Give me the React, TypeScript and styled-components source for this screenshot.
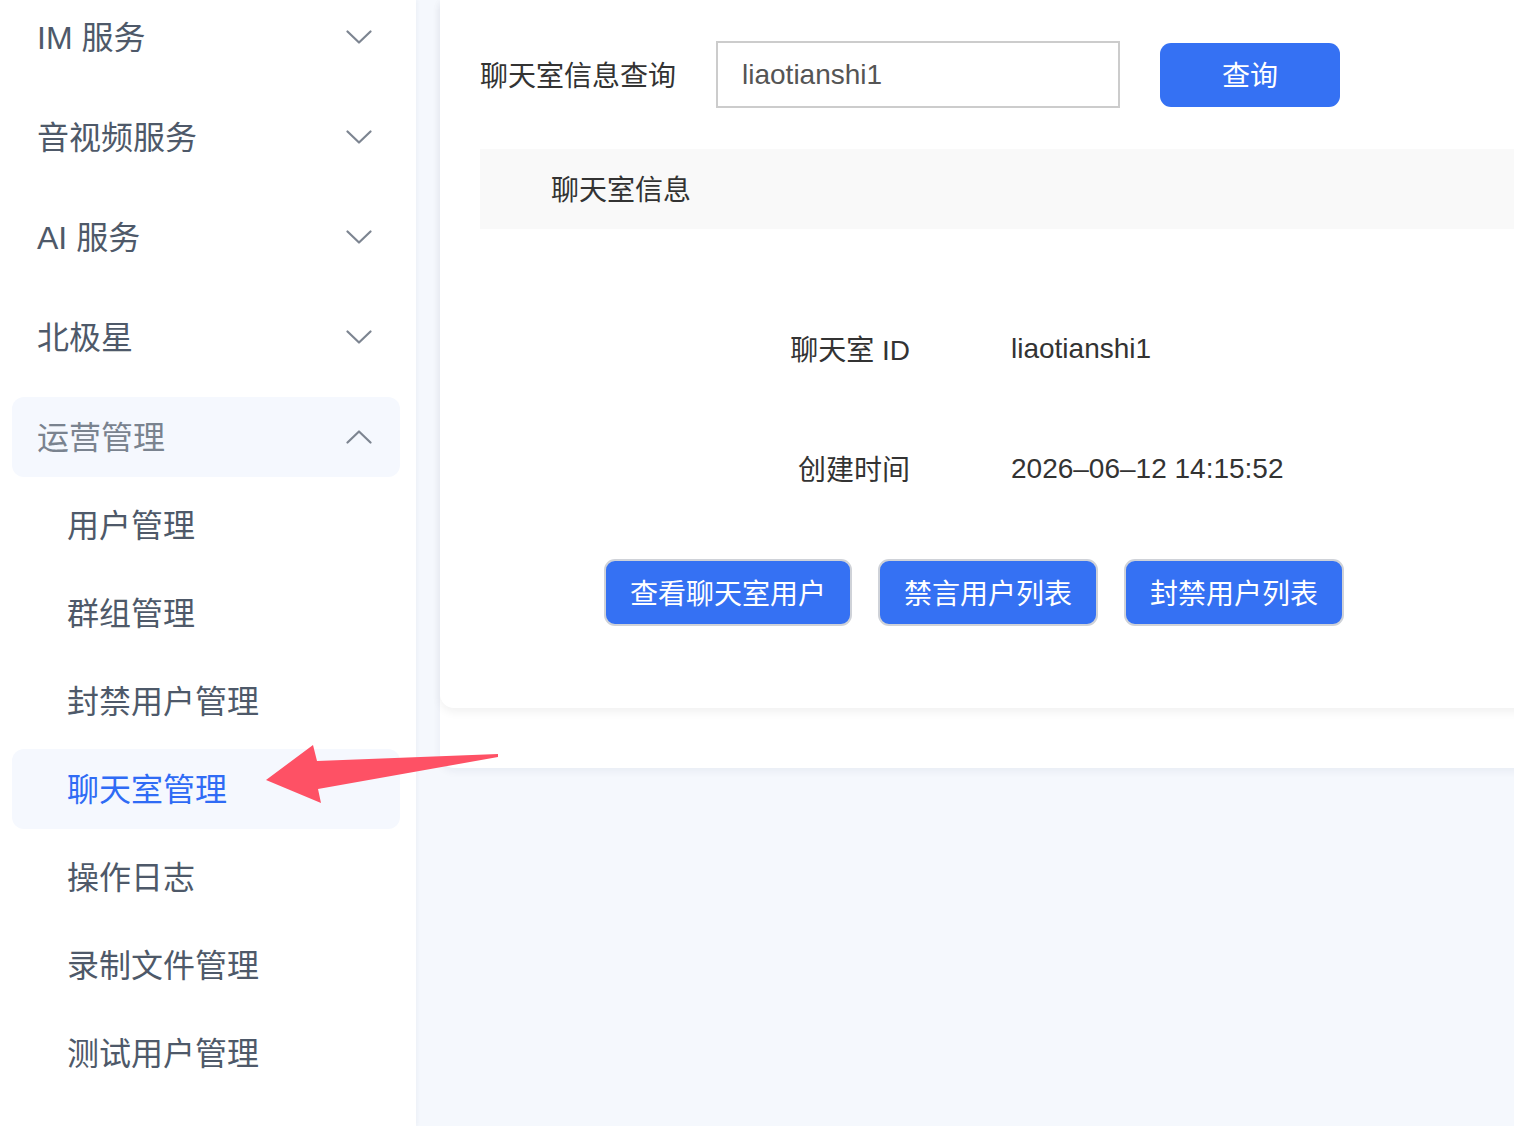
import React from "react";
import styled, { createGlobalStyle } from "styled-components";

const GlobalStyle = createGlobalStyle`
  html, body {
    margin: 0;
    padding: 0;
    background: #ffffff;
  }
  body {
    font-family: "Liberation Sans", "Noto Sans CJK SC", sans-serif;
    -webkit-font-smoothing: antialiased;
  }
  * { box-sizing: border-box; }
`;

const Page = styled.div`
  position: relative;
  display: flex;
  width: 100vw;
  height: 100vh;
  overflow: hidden;
`;

const Sidebar = styled.aside`
  width: 416px;
  flex-shrink: 0;
  background: #ffffff;
  padding: 0 16px 0 12px;
  box-shadow: 1px 0 4px rgba(30, 50, 90, 0.05);
  z-index: 1;
`;

const MenuList = styled.nav`
  display: flex;
  flex-direction: column;
  margin-top: -3px;
`;

const GroupTitle = styled.div<{ $open?: boolean }>`
  display: flex;
  align-items: center;
  justify-content: space-between;
  height: 80px;
  margin-bottom: ${(p) => (p.$open ? "0" : "20px")};
  padding: 0 28px 4px 25px;
  border-radius: 12px;
  font-size: 32px;
  color: ${(p) => (p.$open ? "#7a838f" : "#4e5969")};
  background: ${(p) => (p.$open ? "#f5f8fe" : "transparent")};
`;

const SubItem = styled.div<{ $active?: boolean }>`
  display: flex;
  align-items: center;
  height: 80px;
  margin-top: 8px;
  padding: 0 0 4px 55px;
  border-radius: 12px;
  font-size: 32px;
  color: ${(p) => (p.$active ? "#2f6bf5" : "#4e5969")};
  background: ${(p) => (p.$active ? "#f5f8fe" : "transparent")};
`;

const ChevronBox = styled.span`
  display: inline-flex;
  margin-top: 4px;
`;

const Chevron = ({ up }: { up?: boolean }) => (
  <ChevronBox>
    <svg width="26" height="14" viewBox="0 0 26 14" fill="none">
      <path
        d={up ? "M1.5 12.5 L13 1.5 L24.5 12.5" : "M1.5 1.5 L13 12.5 L24.5 1.5"}
        stroke="#7d8591"
        strokeWidth="2.2"
        strokeLinecap="round"
        strokeLinejoin="round"
      />
    </svg>
  </ChevronBox>
);

const Main = styled.main`
  flex: 1;
  min-width: 0;
  background: #f5f8fd;
  padding-left: 24px;
  overflow: hidden;
`;

const Panel = styled.section`
  width: 1130px;
  height: 768px;
  background: #ffffff;
  border-radius: 0 0 0 14px;
  box-shadow: 0 3px 8px rgba(20, 40, 80, 0.06);
`;

const Card = styled.div`
  height: 708px;
  background: #ffffff;
  border-radius: 0 0 0 14px;
  box-shadow: 0 4px 10px rgba(0, 0, 0, 0.06);
  padding: 41px 40px 0 40px;
  color: #333333;
`;

const SearchRow = styled.div`
  display: flex;
  align-items: center;
  gap: 40px;
  height: 67px;
`;

const FieldLabel = styled.label`
  font-size: 28px;
  color: #333333;
  white-space: nowrap;
  padding-bottom: 2px;
`;

const SearchInput = styled.input`
  width: 404px;
  height: 67px;
  border: 2px solid #cccccc;
  border-radius: 0;
  padding: 0 24px;
  font-family: "Liberation Sans", "Noto Sans CJK SC", sans-serif;
  font-size: 28px;
  color: #555555;
  outline: none;
`;

const PrimaryButton = styled.button<{ $outlined?: boolean }>`
  display: inline-flex;
  align-items: center;
  justify-content: center;
  height: ${(p) => (p.$outlined ? "67px" : "64px")};
  min-width: ${(p) => (p.$outlined ? "0" : "180px")};
  padding: ${(p) => (p.$outlined ? "0 24px 2px" : "0 0 2px")};
  border: ${(p) => (p.$outlined ? "2px solid #cfd2d8" : "none")};
  border-radius: 11px;
  background: #3571f3;
  color: #ffffff;
  font-family: "Liberation Sans", "Noto Sans CJK SC", sans-serif;
  font-size: 28px;
  cursor: pointer;
`;

const SectionHeader = styled.div`
  display: flex;
  align-items: center;
  height: 80px;
  margin-top: 41px;
  padding: 0 0 2px 71px;
  background: #f9f9f9;
  font-size: 28px;
  color: #333333;
`;

const InfoGrid = styled.dl`
  display: grid;
  grid-template-columns: 430px 1fr;
  column-gap: 101px;
  row-gap: 60px;
  margin: 90px 0 0 0;
`;

const InfoLabel = styled.dt`
  display: flex;
  align-items: center;
  justify-content: flex-end;
  height: 60px;
  padding-bottom: 2px;
  font-size: 28px;
  color: #333333;
`;

const InfoValue = styled.dd`
  display: flex;
  align-items: center;
  height: 60px;
  margin: 0;
  font-size: 28px;
  color: #333333;
`;

const ActionRow = styled.div`
  display: flex;
  gap: 26px;
  margin-top: 60px;
  padding-left: 124px;
`;

const Pointer = styled.svg`
  position: absolute;
  left: 0;
  top: 0;
  pointer-events: none;
  z-index: 5;
`;

const topGroups = ["IM 服务", "音视频服务", "AI 服务", "北极星"];
const opsItems = ["用户管理", "群组管理", "封禁用户管理", "聊天室管理", "操作日志", "录制文件管理", "测试用户管理"];

export default function App() {
  return (
    <>
      <GlobalStyle />
      <Page>
        <Sidebar>
          <MenuList>
            {topGroups.map((g) => (
              <GroupTitle key={g}>
                <span>{g}</span>
                <Chevron />
              </GroupTitle>
            ))}
            <GroupTitle $open>
              <span>运营管理</span>
              <Chevron up />
            </GroupTitle>
            {opsItems.map((item) => (
              <SubItem key={item} $active={item === "聊天室管理"}>
                {item}
              </SubItem>
            ))}
          </MenuList>
        </Sidebar>
        <Main>
          <Panel>
            <Card>
              <SearchRow>
                <FieldLabel htmlFor="room-query">聊天室信息查询</FieldLabel>
                <SearchInput id="room-query" defaultValue="liaotianshi1" />
                <PrimaryButton>查询</PrimaryButton>
              </SearchRow>
              <SectionHeader>聊天室信息</SectionHeader>
              <InfoGrid>
                <InfoLabel>聊天室 ID</InfoLabel>
                <InfoValue>liaotianshi1</InfoValue>
                <InfoLabel>创建时间</InfoLabel>
                <InfoValue>2026–06–12 14:15:52</InfoValue>
              </InfoGrid>
              <ActionRow>
                <PrimaryButton $outlined>查看聊天室用户</PrimaryButton>
                <PrimaryButton $outlined>禁言用户列表</PrimaryButton>
                <PrimaryButton $outlined>封禁用户列表</PrimaryButton>
              </ActionRow>
            </Card>
          </Panel>
        </Main>
        <Pointer width="1514" height="1126" viewBox="0 0 1514 1126">
          <polygon
            points="266,780 313,745 317,761 498,754 498,757 318,789 321,803"
            fill="#fe5165"
          />
        </Pointer>
      </Page>
    </>
  );
}
